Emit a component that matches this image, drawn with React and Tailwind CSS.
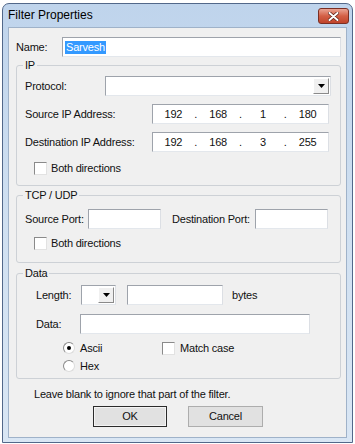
import React from 'react';

const font = "font-['Liberation_Sans',Arial,sans-serif]";

const Field = ({ className = '', children }) => (
  <div
    className={`h-[20px] bg-white border border-[#9ea3ab] border-r-[#dcdfe4] border-b-[#e3e7ec] ${className}`}
  >
    {children}
  </div>
);

const Arrow = () => (
  <svg width="7" height="4" viewBox="0 0 7 4">
    <path d="M0 0h7L3.5 4z" fill="#000" />
  </svg>
);

const DropButton = () => (
  <div className="w-[16px] h-full flex items-center justify-center bg-[#f0f0f0] border border-white border-r-[#8a8a8a] border-b-[#8a8a8a]">
    <Arrow />
  </div>
);

const Check = () => (
  <div className="w-[13px] h-[13px] shrink-0 bg-white border border-[#8a8a8a] border-r-[#e2e2e2] border-b-[#e2e2e2]" />
);

const Radio = ({ on }) => (
  <div className="w-[12px] h-[12px] shrink-0 rounded-full bg-white border border-[#8a8a8a] border-r-[#dcdcdc] border-b-[#dcdcdc] flex items-center justify-center">
    {on && <div className="w-[4px] h-[4px] rounded-full bg-black" />}
  </div>
);

const Group = ({ title, className = '', children }) => (
  <div className={`relative border border-[#cdd1d6] rounded-[3px] ${className}`}>
    <span className="absolute left-[6px] -top-[8px] px-[2px] bg-[#f0f0f0] leading-[14px]">{title}</span>
    {children}
  </div>
);

const IpBox = ({ parts }) => (
  <Field className="w-[177px] flex items-center">
    {parts.map((p, i) => (
      <React.Fragment key={i}>
        <span className="flex-1 text-center">{p}</span>
        {i < 3 && <span className="w-[4px] text-center">.</span>}
      </React.Fragment>
    ))}
  </Field>
);

export default function App() {
  return (
    <div className={`w-[355px] h-[444px] bg-white pt-[3px] pl-[2px] text-[11px] tracking-[-0.2px] text-[#111] ${font}`}>
      <div className="w-[351px] h-[440px] flex flex-col border border-[#52688a] rounded-t-[7px] bg-gradient-to-b from-[#bfd4ec] via-[#d0e0f1] to-[#d9e6f4] pb-[4px]">
        <div className="h-[23px] flex items-start justify-between pl-[5px] pr-[3px] pt-[4px]">
          <span className="text-[12px] tracking-normal leading-[15px] text-black">Filter Properties</span>
          <div className="w-[31px] h-[16px] rounded-[3px] border border-[#7a2f24] bg-gradient-to-b from-[#e9a393] via-[#d35f45] to-[#c0442b] flex items-center justify-center">
            <svg width="11" height="9" viewBox="0 0 11 9">
              <path d="M1.5 1l8 7M9.5 1l-8 7" stroke="#5a1f16" strokeWidth="3.4" strokeLinecap="round" />
              <path d="M1.5 1l8 7M9.5 1l-8 7" stroke="#fff" strokeWidth="2" strokeLinecap="round" />
            </svg>
          </div>
        </div>

        <div className="flex-1 mx-[5px] bg-[#f0f0f0] border border-[#9fb2c9] pt-[9px] pl-[7px] pr-[5px]">
          <div className="h-[20px] flex items-center">
            <span className="w-[46px]">Name:</span>
            <Field className="flex-1 flex items-center pl-[2px]">
              <span className="bg-[#3399ff] text-white leading-[13px] px-[1px]">Sarvesh</span>
            </Field>
          </div>

          <Group title="IP" className="mt-[8px] pt-[10px] pl-[8px] pr-[9px] pb-[10px]">
            <div className="h-[20px] flex items-center">
              <span className="w-[80px]">Protocol:</span>
              <Field className="flex-1 flex justify-end p-[1px]">
                <DropButton />
              </Field>
            </div>
            <div className="h-[20px] mt-[8px] flex items-center justify-between pr-[2px]">
              <span>Source IP Address:</span>
              <IpBox parts={['192', '168', '1', '180']} />
            </div>
            <div className="h-[20px] mt-[8px] flex items-center justify-between pr-[2px]">
              <span>Destination IP Address:</span>
              <IpBox parts={['192', '168', '3', '255']} />
            </div>
            <div className="h-[13px] mt-[10px] ml-[9px] flex items-center gap-[4px]">
              <Check />
              <span>Both directions</span>
            </div>
          </Group>

          <Group title="TCP / UDP" className="mt-[9px] pt-[13px] pl-[8px] pr-[11px] pb-[12px]">
            <div className="h-[20px] flex items-center">
              <span className="w-[63px]">Source Port:</span>
              <Field className="w-[73px]" />
              <span className="ml-[11px] w-[83px]">Destination Port:</span>
              <Field className="w-[73px]" />
            </div>
            <div className="h-[13px] mt-[8px] ml-[9px] flex items-center gap-[4px]">
              <Check />
              <span>Both directions</span>
            </div>
          </Group>

          <Group title="Data" className="mt-[10px] pt-[11px] pl-[19px] pb-[4px]">
            <div className="h-[20px] flex items-center">
              <span className="w-[45px]">Length:</span>
              <Field className="w-[35px] flex justify-end p-[1px]">
                <DropButton />
              </Field>
              <Field className="w-[96px] ml-[11px]" />
              <span className="ml-[9px]">bytes</span>
            </div>
            <div className="h-[20px] mt-[9px] flex items-center">
              <span className="w-[44px]">Data:</span>
              <Field className="w-[230px]" />
            </div>
            <div className="mt-[6px] pl-[27px] flex">
              <div className="w-[99px] flex flex-col gap-[2px]">
                <div className="h-[16px] flex items-center gap-[5px]">
                  <Radio on />
                  <span>Ascii</span>
                </div>
                <div className="h-[16px] flex items-center gap-[5px]">
                  <Radio />
                  <span>Hex</span>
                </div>
              </div>
              <div className="h-[16px] flex items-center gap-[5px]">
                <Check />
                <span>Match case</span>
              </div>
            </div>
          </Group>

          <div className="mt-[8px] pl-[18px] h-[14px] leading-[14px]">
            Leave blank to ignore that part of the filter.
          </div>

          <div className="mt-[5px] flex justify-center gap-[21px] pr-[1px]">
            <button className="w-[74px] h-[21px] bg-[#e1e1e1] border border-[#2b2b2b] text-[11px] shadow-[inset_0_0_0_1px_#f4f4f4]">
              OK
            </button>
            <button className="w-[75px] h-[21px] bg-[#e1e1e1] border border-[#adadad] text-[11px]">
              Cancel
            </button>
          </div>
        </div>
      </div>
    </div>
  );
}
